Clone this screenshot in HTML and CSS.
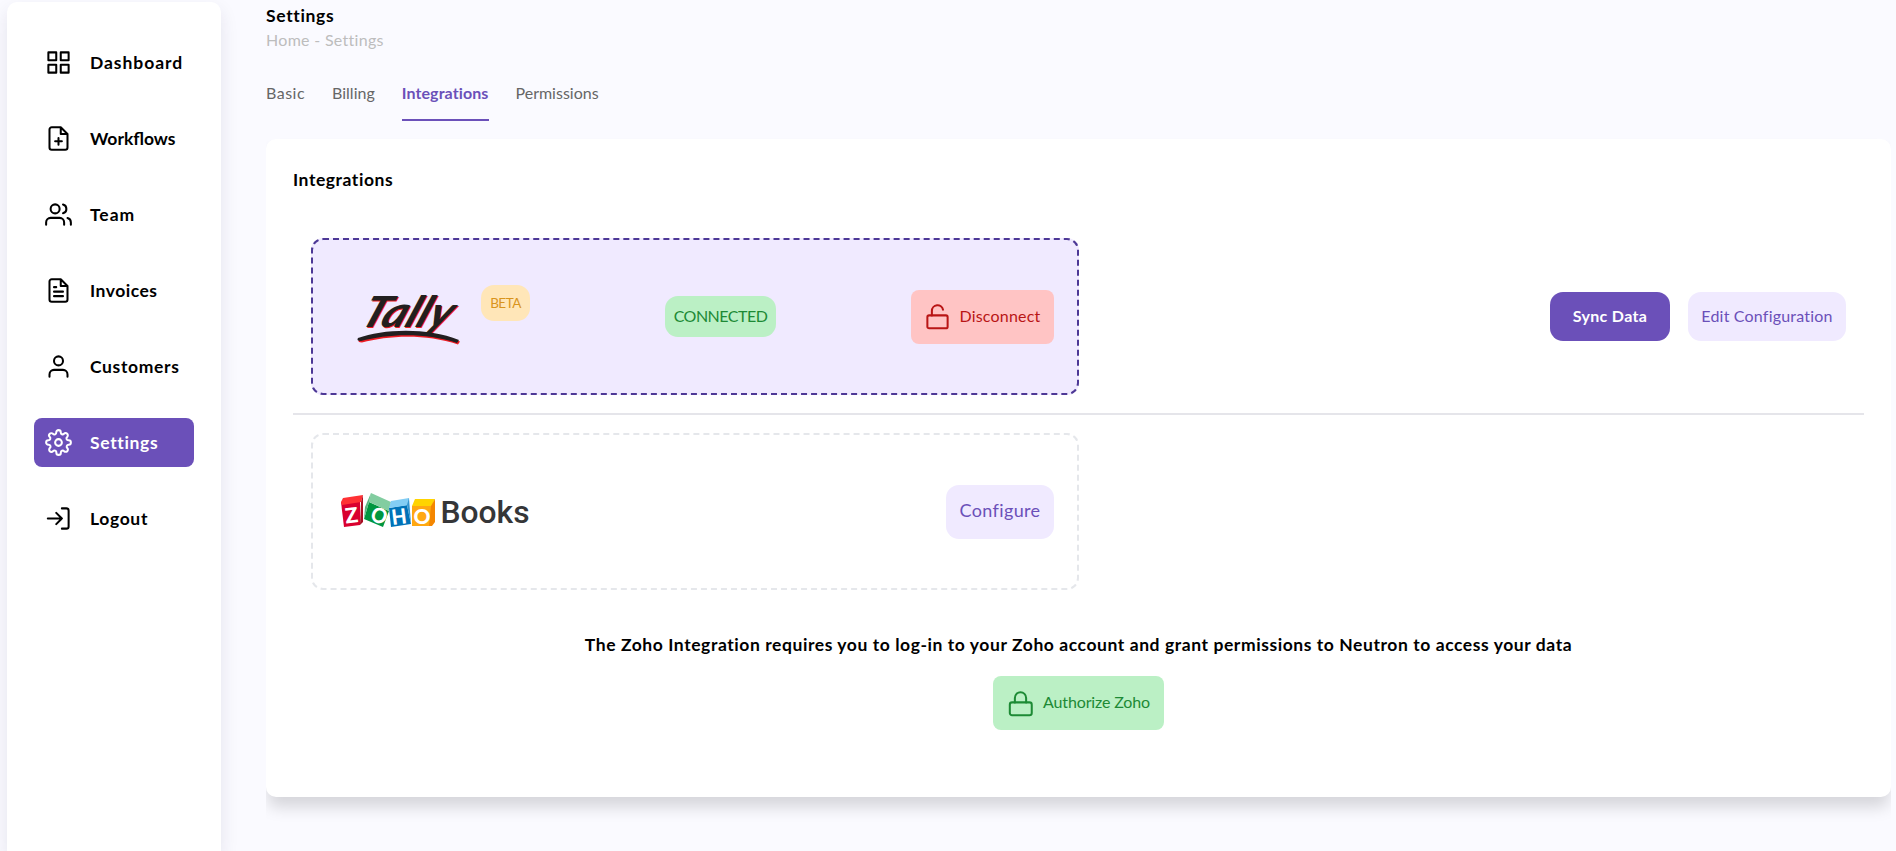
FILE: index.html
```html
<!DOCTYPE html>
<html lang="en">
<head>
<meta charset="utf-8">
<title>Settings</title>
<link rel="stylesheet" href="styles.css">
</head>
<body>
<div class="app">
  <aside class="sidebar">
    <nav class="nav">
      <a class="item"><svg class="icon" viewBox="0 0 24 24"><path d="M3 3h7v7H3zM14 3h7v7h-7zM14 14h7v7h-7zM3 14h7v7H3z"/></svg><span class="track-xl">Dashboard</span></a>
      <a class="item"><svg class="icon" viewBox="0 0 24 24"><path d="M14 2H6a2 2 0 0 0-2 2v16a2 2 0 0 0 2 2h12a2 2 0 0 0 2-2V8zM14 2v6h6M12 11.500v6M9 14.500h6"/></svg><span>Workflows</span></a>
      <a class="item"><svg class="icon" viewBox="0 0 24 24"><path d="M17 21v-2a4 4 0 0 0-4-4H5a4 4 0 0 0-4 4v2M23 21v-2a4 4 0 0 0-3-3.870M16 3.130a4 4 0 0 1 0 7.750"/><circle cx="9" cy="7" r="4"/></svg><span class="track-xl">Team</span></a>
      <a class="item"><svg class="icon" viewBox="0 0 24 24"><path d="M14 2H6a2 2 0 0 0-2 2v16a2 2 0 0 0 2 2h12a2 2 0 0 0 2-2V8zM14 2v6h6M16 13H8M16 17H8M10 9H8"/></svg><span class="track-md">Invoices</span></a>
      <a class="item"><svg class="icon" viewBox="0 0 24 24"><path d="M20 21v-2a4 4 0 0 0-4-4H8a4 4 0 0 0-4 4v2"/><circle cx="12" cy="7" r="4"/></svg><span class="track-lg">Customers</span></a>
      <a class="item active"><svg class="icon" viewBox="0 0 24 24"><circle cx="12" cy="12" r="3"/><path d="M19.400 15a1.650 1.650 0 0 0 .33 1.820l.06.06a2 2 0 1 1-2.830 2.830l-.06-.06a1.650 1.650 0 0 0-2.800 1.170V21a2 2 0 0 1-4 0v-.09A1.650 1.650 0 0 0 7.180 19.730l-.06.06a2 2 0 1 1-2.830-2.830l.06-.06A1.650 1.650 0 0 0 3.090 14H3a2 2 0 0 1 0-4h.09A1.650 1.650 0 0 0 4.270 7.180l-.06-.06a2 2 0 1 1 2.830-2.830l.06.06A1.650 1.650 0 0 0 10 3.090V3a2 2 0 0 1 4 0v.09a1.650 1.650 0 0 0 2.820 1.180l.06-.06a2 2 0 1 1 2.830 2.830l-.06.06A1.650 1.650 0 0 0 20.910 10H21a2 2 0 0 1 0 4h-.09a1.650 1.650 0 0 0-1.510 1z"/></svg><span class="track-lg">Settings</span></a>
      <a class="item"><svg class="icon" viewBox="0 0 24 24"><path d="M15 3h4a2 2 0 0 1 2 2v14a2 2 0 0 1-2 2h-4M10 17l5-5-5-5M15 12H2.500"/></svg><span class="track-lg">Logout</span></a>
    </nav>
  </aside>

  <main class="main">
    <h1 class="title track-lg">Settings</h1>
    <p class="crumbs">Home - Settings</p>
    <div class="tabs">
      <a class="tab track-md">Basic</a>
      <a class="tab">Billing</a>
      <a class="tab selected">Integrations</a>
      <a class="tab">Permissions</a>
    </div>

    <section class="panel">
      <h2 class="panel-title">Integrations</h2>

      <div class="row">
        <div class="card connected">
          <div class="brand">
            <svg class="tally" viewBox="0 0 104 54" role="img" aria-label="Tally">
              <g class="tally-red" transform="translate(1 1.500)">
                <text transform="translate(1 34.500) skewX(-22)" textLength="90" lengthAdjust="spacingAndGlyphs">Tally</text>
                <path d="M1 46C26 37 70 35 102 48L100 51C68 40 30 42 4 49Q-1 49 1 46Z"/>
              </g>
              <g class="tally-black">
                <text transform="translate(1 34.500) skewX(-22)" textLength="90" lengthAdjust="spacingAndGlyphs">Tally</text>
                <path d="M1 46C26 37 70 35 102 48L100 51C68 40 30 42 4 49Q-1 49 1 46Z"/>
              </g>
            </svg>
            <span class="beta">BETA</span>
          </div>
          <span class="status">CONNECTED</span>
          <button class="btn danger"><svg class="icon" viewBox="0 0 24 24"><rect x="3" y="11" width="18" height="11.500" rx="1.500"/><path d="M7 11V7a5 5 0 0 1 9.900-1"/></svg><span class="label">Disconnect</span></button>
        </div>
        <div class="actions">
          <button class="btn primary"><span class="label">Sync Data</span></button>
          <button class="btn soft edit"><span class="label">Edit Configuration</span></button>
        </div>
      </div>

      <hr class="divider">

      <div class="card">
        <svg class="zoho" viewBox="0 0 190 34" role="img" aria-label="Zoho Books">
          <path fill="#d9002f" d="M0 7L19 4V30L3 32Z"/><path fill="#ff3134" d="M0 7L2 3L22 0L20 7L1 10Z"/><path fill="#a80d22" d="M20 7L22 0V27L19 30Z"/>
          <path fill="#00963f" d="M28 7L48 16L42 32L23 24Z"/><path fill="#82cda0" d="M28 7L30-2L50 7L48 16Z"/><path fill="#58b37e" d="M28 7L30-2L24 12L23 24Z"/>
          <path fill="#0072b8" d="M48 13L66 10L70 29L50 32Z"/><path fill="#83cdf4" d="M48 13L50 6L68 3V10Z"/><path fill="#3495cf" d="M66 10L68 3L70 29Z"/>
          <path fill="#ffa811" d="M71 11H90V31H71Z"/><path fill="#ffd400" d="M71 11L74 4H94L91 11Z"/><path fill="#f48600" d="M90 11L94 4V27L91 31H88Z"/>
          <g class="zoho-letters">
            <text transform="translate(5 28.500) rotate(-7)" textLength="13" lengthAdjust="spacingAndGlyphs">Z</text>
            <text transform="translate(28 24.500) rotate(22)" textLength="16" lengthAdjust="spacingAndGlyphs">O</text>
            <text transform="translate(51.500 30) rotate(-7)" textLength="15" lengthAdjust="spacingAndGlyphs">H</text>
            <text transform="translate(72.500 29)" textLength="17" lengthAdjust="spacingAndGlyphs">O</text>
          </g>
          <text class="zoho-books" x="99.500" y="27.500" textLength="89" lengthAdjust="spacingAndGlyphs">Books</text>
        </svg>
        <button class="btn soft configure"><span class="label">Configure</span></button>
      </div>

      <div class="authorize">
        <p class="message">The Zoho Integration requires you to log-in to your Zoho account and grant permissions to Neutron to access your data</p>
        <button class="btn success"><svg class="icon" viewBox="0 0 24 24"><rect x="2.500" y="11" width="19.500" height="11.500" rx="2"/><path d="M7 11V7a5 5 0 0 1 10 0v4"/></svg><span class="label">Authorize Zoho</span></button>
      </div>
    </section>
  </main>
</div>
</body>
</html>
```
FILE: styles.css
```css
* { box-sizing: border-box; }
body {
  margin: 0;
  background: #fafaff;
  color: #000;
  font-family: Lato, "Open Sans", sans-serif;
  overflow: hidden;
}
.app { display: flex; height: 851px; padding-left: 7px; }
.icon {
  width: 27px; height: 27px; flex: none;
  fill: none; stroke: currentColor; stroke-width: 1.800;
  stroke-linecap: round; stroke-linejoin: round;
}

.sidebar {
  width: 214px; flex: none; margin-top: 2px; height: 849px;
  background: #fff; border-radius: 10px 10px 0 0;
  box-shadow: 0 8px 18px rgba(40, 30, 80, .1);
}
.nav { display: flex; flex-direction: column; gap: 27px; padding: 36px 27px; }
.item {
  display: flex; align-items: center; gap: 18px;
  height: 49px; padding-left: 11px; border-radius: 8px;
  font-size: 17.500px; font-weight: 700; white-space: nowrap;
}
.item.active { background: #6b50b9; color: #fff; }
.track-md { letter-spacing: .5px; }
.track-lg { letter-spacing: .65px; }
.track-xl { letter-spacing: .95px; }

.main { width: 1625px; margin-left: 45px; overflow: hidden; }
.title { margin: 4px 0 0; font-size: 17.500px; line-height: 24px; font-weight: 700; }
.crumbs { margin: 0; font-size: 16px; line-height: 23px; color: #bdbdbd; letter-spacing: .3px; }
.tabs { display: flex; gap: 27px; margin-top: 26px; }
.tab {
  height: 44px; font-size: 16px; line-height: 32px; color: #666;
  border-bottom: 2px solid transparent; white-space: nowrap;
}
.tab.selected { color: #6b50b9; font-weight: 700; border-color: #6b50b9; letter-spacing: .1px; }

.panel {
  margin-top: 18px; height: 658px; padding: 28px 27px 0;
  background: #fff; border-radius: 10px;
  box-shadow: 0 12px 16px -2px rgba(0, 0, 0, .15);
}
.panel-title { margin: 0; font-size: 17.500px; line-height: 26px; font-weight: 700; letter-spacing: .55px; }
.row { display: flex; align-items: center; justify-content: space-between; margin-top: 45px; padding-right: 18px; }
.card {
  display: flex; align-items: center; justify-content: space-between;
  width: 768px; height: 157px; margin-left: 18px; padding: 0 23px 0 28px;
  border: 2px dashed #e5e7eb; border-radius: 12px;
}
.card.connected { background: #f0eaff; border-color: #4d3896; padding-left: 44px; }
.brand { display: flex; align-items: flex-start; gap: 20px; padding-bottom: 2px; }
.tally { width: 104px; height: 54px; margin-top: 7px; overflow: visible; }
.tally text { font: italic 700 43px Lato, sans-serif; }
.tally-red { fill: #ed1c24; }
.tally-black { fill: #221f20; }
.beta {
  display: flex; align-items: center; justify-content: center;
  width: 49px; height: 36px; border-radius: 13px;
  background: #ffe6b8; color: #d9941c; font-size: 13.500px; letter-spacing: -.5px;
}
.status {
  display: flex; align-items: center; justify-content: center;
  width: 111px; height: 41px; padding-bottom: 2px; border-radius: 13px;
  background: #bbf0c5; color: #1d8a35; font-size: 16px; letter-spacing: -.5px;
}
.actions { display: flex; gap: 18px; }
.btn {
  display: flex; align-items: center; justify-content: center;
  padding: 0; border: 0; border-radius: 13px;
  font-family: inherit; font-size: 16px; white-space: nowrap;
}
.label { padding-bottom: 3px; }
.primary { width: 120px; height: 49px; background: #6b50b9; color: #fff; font-weight: 700; letter-spacing: .35px; }
.soft { background: #f0eaff; color: #6b50b9; }
.edit { width: 158px; height: 49px; letter-spacing: .2px; }
.configure { width: 108px; height: 54px; font-size: 18px; letter-spacing: .35px; }
.danger { width: 143px; height: 54px; gap: 8px; border-radius: 8px; background: #ffc4c4; color: #b91515; letter-spacing: .2px; }
.success { width: 171px; height: 54px; gap: 9px; border-radius: 8px; background: #bbf0c5; color: #1d8a35; letter-spacing: -.15px; }
.divider { height: 2px; margin: 18px 0; border: 0; background: #e5e5ea; }

.zoho { width: 190px; height: 34px; overflow: visible; }
.zoho-letters { font: 900 21px Lato, sans-serif; fill: #fff; }
.zoho-books { font: 500 31px Roboto, sans-serif; fill: #353638; }
.authorize { display: flex; flex-direction: column; align-items: center; gap: 18px; margin-top: 42px; }
.message { margin: 0; font-size: 17.500px; line-height: 26px; font-weight: 700; white-space: nowrap; letter-spacing: .57px; }
```
